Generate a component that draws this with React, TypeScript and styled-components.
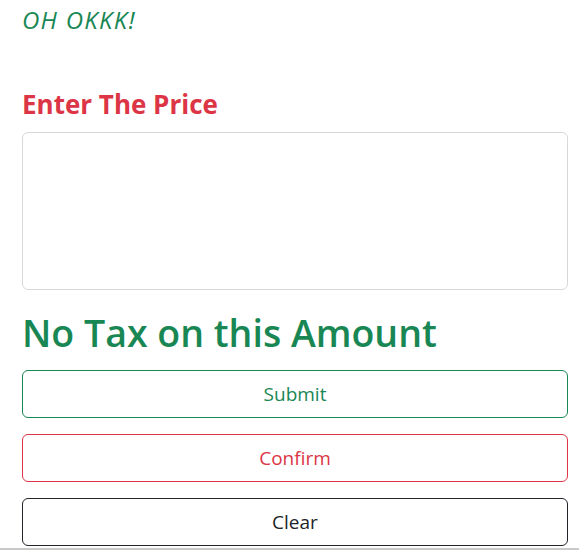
import * as React from 'react';
import styled, { createGlobalStyle } from 'styled-components';

const GlobalStyle = createGlobalStyle`
    html, body {
        margin: 0;
        padding: 0;
        background: #ffffff;
        font-family: 'Open Sans', 'Noto Sans', 'Liberation Sans', sans-serif;
        color: #212529;
    }
    * {
        box-sizing: border-box;
    }
`;

const colors = {
    success: '#198754',
    danger: '#dc3545',
    dark: '#212529',
    border: '#d6d9dc',
};

const Page = styled.div`
    display: flex;
    flex-direction: column;
    width: 579px;
`;

const Container = styled.main`
    display: flex;
    flex-direction: column;
    padding: 6px 12px 0 22px;
    width: 579px;
`;

const Greeting = styled.h4`
    margin: 0;
    font-size: 24px;
    line-height: 1.2;
    letter-spacing: 1.3px;
    font-weight: 400;
    font-style: italic;
    color: ${colors.success};
`;

const Label = styled.h3`
    margin: 54px 0 0;
    font-size: 26px;
    line-height: 1.2;
    font-weight: 700;
    color: ${colors.danger};
`;

const PriceInput = styled.textarea`
    margin-top: 12px;
    width: 546px;
    height: 158px;
    border: 1px solid ${colors.border};
    border-radius: 6px;
    padding: 6px 12px;
    font: inherit;
    resize: none;
    outline: none;
`;

const Result = styled.h1`
    margin: 20px 0 0;
    font-size: 37.5px;
    line-height: 1.2;
    font-weight: 600;
    color: ${colors.success};
`;

const Actions = styled.div`
    display: flex;
    flex-direction: column;
    gap: 16px;
    margin-top: 15px;
`;

const ActionButton = styled.button<{ $tone: string }>`
    width: 546px;
    height: 48px;
    padding: 0 16px;
    background: transparent;
    border: 1px solid ${(p) => p.$tone};
    border-radius: 6px;
    color: ${(p) => p.$tone};
    font-family: inherit;
    font-size: 19px;
    line-height: 1.5;
    cursor: pointer;
`;

const BottomEdge = styled.div`
    margin-top: 2px;
    height: 3px;
    width: 579px;
    background: #c9c9c9;
`;

export default function App() {
    const [price, setPrice] = React.useState('');

    return (
        <>
            <GlobalStyle />
            <Page>
                <Container>
                    <Greeting>OH OKKK!</Greeting>
                    <Label>Enter The Price</Label>
                    <PriceInput value={price} onChange={(e) => setPrice(e.target.value)} />
                    <Result>No Tax on this Amount</Result>
                    <Actions>
                        <ActionButton $tone={colors.success}>Submit</ActionButton>
                        <ActionButton $tone={colors.danger}>Confirm</ActionButton>
                        <ActionButton $tone={colors.dark} onClick={() => setPrice('')}>
                            Clear
                        </ActionButton>
                    </Actions>
                </Container>
                <BottomEdge />
            </Page>
        </>
    );
}
